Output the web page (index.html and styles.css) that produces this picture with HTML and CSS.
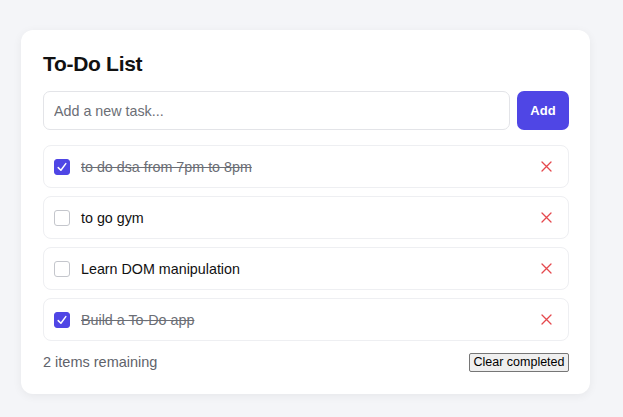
FILE: index.html
```html
<!DOCTYPE html>
<html lang="en">
<head>
<meta charset="utf-8">
<title>To-Do List</title>
<link rel="stylesheet" href="styles.css">
</head>
<body>
<main class="card">
  <h1 class="title">To-Do List</h1>
  <form class="add-row">
    <input class="task-input" type="text" placeholder="Add a new task...">
    <button class="add-btn" type="button">Add</button>
  </form>
  <ul class="list">
    <li class="item done">
      <span class="check checked"><svg viewBox="0 0 16 16" width="16" height="16"><path d="M4.2 8.6 L6.9 11.3 L11.8 4.6" fill="none" stroke="#fff" stroke-width="1.5" stroke-linecap="round" stroke-linejoin="round"/></svg></span>
      <span class="text">to do dsa from 7pm to 8pm</span>
      <button class="del" type="button" aria-label="Delete"><svg viewBox="0 0 11 11" width="11" height="11"><path d="M1 1 L10 10 M10 1 L1 10" stroke="#e5484d" stroke-width="1.3" stroke-linecap="round"/></svg></button>
    </li>
    <li class="item">
      <span class="check"></span>
      <span class="text">to go gym</span>
      <button class="del" type="button" aria-label="Delete"><svg viewBox="0 0 11 11" width="11" height="11"><path d="M1 1 L10 10 M10 1 L1 10" stroke="#e5484d" stroke-width="1.3" stroke-linecap="round"/></svg></button>
    </li>
    <li class="item">
      <span class="check"></span>
      <span class="text">Learn DOM manipulation</span>
      <button class="del" type="button" aria-label="Delete"><svg viewBox="0 0 11 11" width="11" height="11"><path d="M1 1 L10 10 M10 1 L1 10" stroke="#e5484d" stroke-width="1.3" stroke-linecap="round"/></svg></button>
    </li>
    <li class="item done">
      <span class="check checked"><svg viewBox="0 0 16 16" width="16" height="16"><path d="M4.2 8.6 L6.9 11.3 L11.8 4.6" fill="none" stroke="#fff" stroke-width="1.5" stroke-linecap="round" stroke-linejoin="round"/></svg></span>
      <span class="text">Build a To-Do app</span>
      <button class="del" type="button" aria-label="Delete"><svg viewBox="0 0 11 11" width="11" height="11"><path d="M1 1 L10 10 M10 1 L1 10" stroke="#e5484d" stroke-width="1.3" stroke-linecap="round"/></svg></button>
    </li>
  </ul>
  <footer class="footer">
    <span class="remaining">2 items remaining</span>
    <button class="clear-btn" type="button">Clear completed</button>
  </footer>
</main>
</body>
</html>
```
FILE: styles.css
```css
* { box-sizing: border-box; }
html, body { margin: 0; }
body {
  background: #f4f5f8;
  font-family: "Liberation Sans", Arial, sans-serif;
  padding: 30px 21px;
  height: 417px;
}
.card {
  width: 569px;
  background: #fff;
  border-radius: 12px;
  box-shadow: 0 2px 10px rgba(0,0,0,0.06);
  padding: 22px 21px 22px 22px;
}
.title {
  margin: 0 0 15px;
  font-size: 21px;
  line-height: 24px;
  font-weight: 700;
  color: #111;
  letter-spacing: -0.3px;
}
.add-row {
  display: flex;
  gap: 7px;
  margin: 0;
}
.task-input {
  flex: 1;
  height: 39px;
  border: 1px solid #e3e4e8;
  border-radius: 7px;
  padding: 0 10px;
  font-family: inherit;
  font-size: 14.3px;
  color: #111;
  outline: none;
}
.task-input::placeholder { color: #6b6e75; }
.add-btn {
  width: 52px;
  height: 39px;
  border: none;
  border-radius: 7px;
  background: #4f46e5;
  color: #fff;
  font-family: inherit;
  font-weight: 700;
  font-size: 13px;
}
.list {
  list-style: none;
  margin: 15px 0 0;
  padding: 0;
  display: flex;
  flex-direction: column;
  gap: 8px;
}
.item {
  display: flex;
  align-items: center;
  height: 43px;
  border: 1px solid #eeeff2;
  border-radius: 8px;
  padding: 0 16px 0 10px;
  gap: 11px;
}
.check {
  width: 16px;
  height: 16px;
  border: 1px solid #c4c6cc;
  border-radius: 3px;
  flex: none;
  display: flex;
}
.check.checked {
  background: #4f46e5;
  border-color: #4f46e5;
}
.check svg { margin: -1px; }
.text {
  flex: 1;
  font-size: 14.3px;
  color: #111;
}
.done .text {
  color: #6b6e75;
  text-decoration: line-through;
}
.del {
  border: none;
  background: none;
  padding: 0;
  width: 11px;
  height: 11px;
  display: flex;
}
.footer {
  margin-top: 11px;
  display: flex;
  justify-content: space-between;
  align-items: center;
  height: 20px;
}
.remaining {
  font-size: 14.5px;
  color: #5f636b;
}
.clear-btn {
  height: 19px;
  width: 100px;
  padding: 0;
  border: 1px solid #767676;
  border-radius: 2px;
  background: #efefef;
  font-family: inherit;
  font-size: 12.5px;
  color: #000;
}
```
